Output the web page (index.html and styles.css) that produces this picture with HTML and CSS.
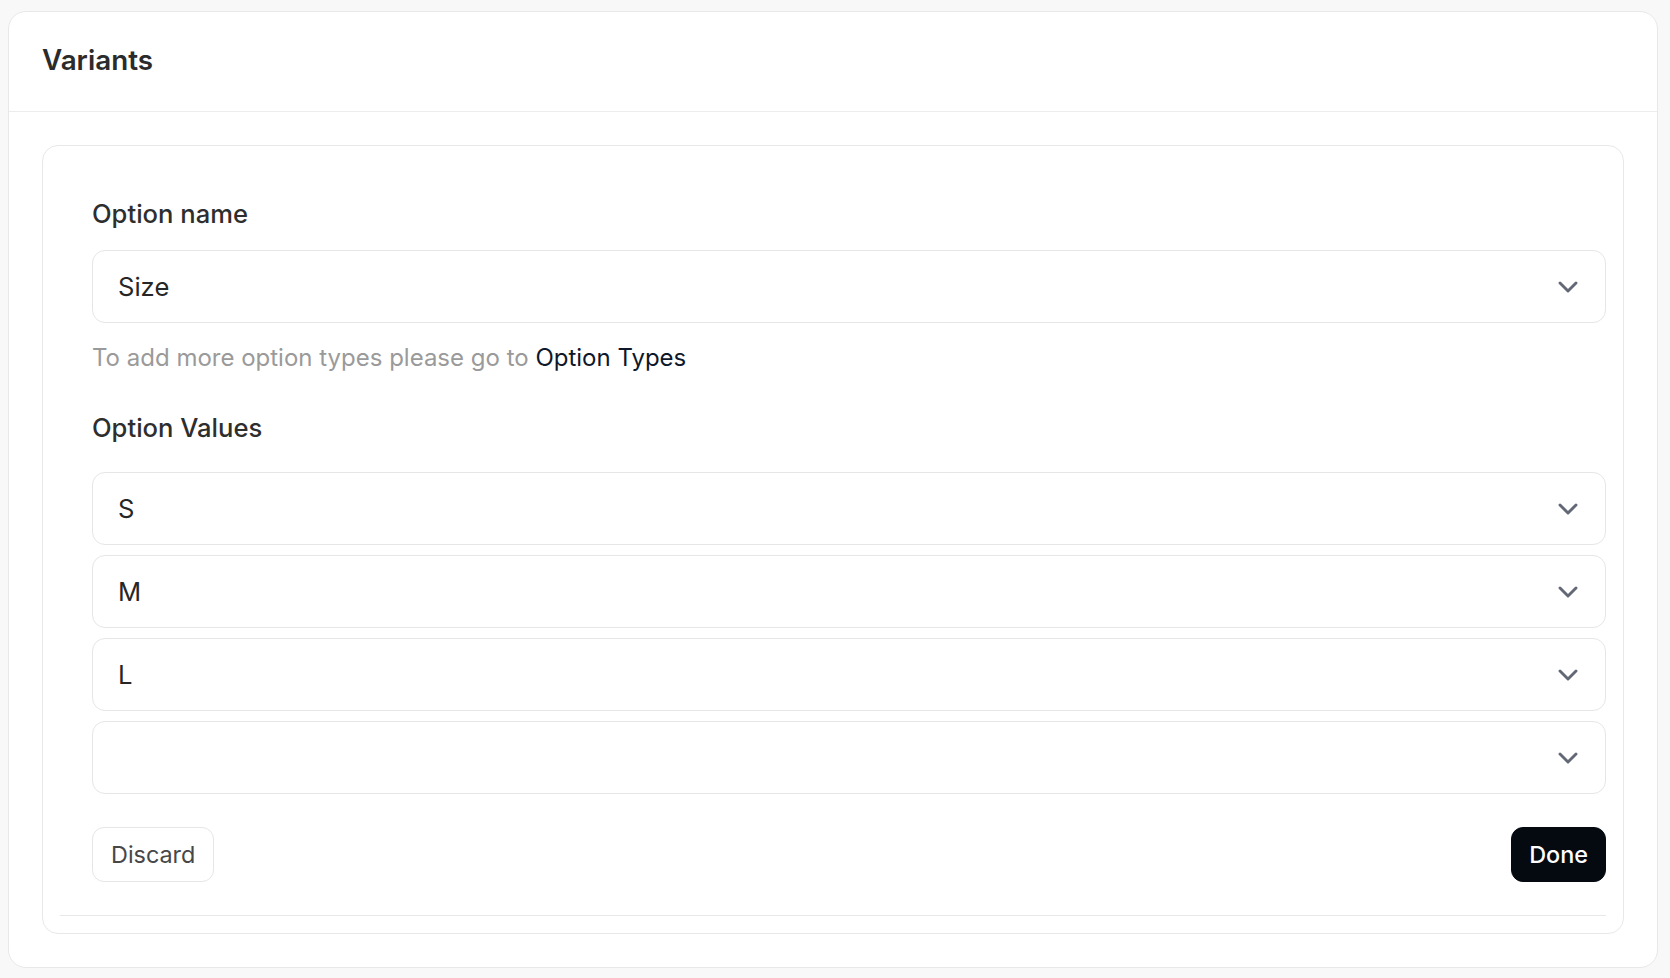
FILE: index.html
```html
<!DOCTYPE html>
<html>
<head>
  <link rel="stylesheet" href="styles.css">
</head>
<body>
  <div class="card">
    <div class="card-header">Variants</div>
    <div class="card-body">
      <div class="option-card">
        <div class="option-form">
          <div class="field-label">Option name</div>
          <div class="select">
            <span class="select-value">Size</span>
            <svg class="chevron" width="20" height="12" viewBox="0 0 20 12"><path d="M2 2 L10 10 L18 2" /></svg>
          </div>
          <div class="help-text">To add more option types please go to <a href="#" class="help-link">Option Types</a></div>

          <div class="field-label values-label">Option Values</div>
          <div class="values-list">
            <div class="select">
              <span class="select-value">S</span>
              <svg class="chevron" width="20" height="12" viewBox="0 0 20 12"><path d="M2 2 L10 10 L18 2" /></svg>
            </div>
            <div class="select">
              <span class="select-value">M</span>
              <svg class="chevron" width="20" height="12" viewBox="0 0 20 12"><path d="M2 2 L10 10 L18 2" /></svg>
            </div>
            <div class="select">
              <span class="select-value">L</span>
              <svg class="chevron" width="20" height="12" viewBox="0 0 20 12"><path d="M2 2 L10 10 L18 2" /></svg>
            </div>
            <div class="select">
              <span class="select-value"></span>
              <svg class="chevron" width="20" height="12" viewBox="0 0 20 12"><path d="M2 2 L10 10 L18 2" /></svg>
            </div>
          </div>

          <div class="actions">
            <button class="btn-discard">Discard</button>
            <button class="btn-done">Done</button>
          </div>
        </div>
      </div>
    </div>
  </div>
</body>
</html>
```

FILE: styles.css
```css
body {
  margin: 0;
  padding: 11px 12px 9px 8px;
  background: #f8f8f8;
  font-family: Inter, 'Liberation Sans', Arial, sans-serif;
  color: #2b2b2b;
}
.card {
  background: #fff;
  border: 1px solid #e8e8e8;
  border-radius: 18px;
}
.card-header {
  padding: 27px 33px 29px;
  border-bottom: 1px solid #ececec;
  font-size: 27.8px;
  font-weight: 600;
  line-height: 43px;
  color: #2b2b2b;
}
.card-body {
  padding: 33px;
}
.option-card {
  border: 1px solid #e8e8e8;
  border-radius: 16px;
  padding: 17px;
}
.option-form {
  padding: 32px 0 33px 32px;
  border-bottom: 1px solid #e8e8e8;
}
.field-label {
  font-size: 25.6px;
  font-weight: 500;
  line-height: 38px;
  color: #2e2e2e;
  margin-bottom: 17px;
}
.values-label {
  margin-top: 33px;
  margin-bottom: 25px;
}
.select {
  height: 73px;
  box-sizing: border-box;
  border: 1px solid #e6e6e6;
  border-radius: 13px;
  display: flex;
  align-items: center;
  justify-content: space-between;
  padding: 0 27px 0 25px;
  background: #fff;
}
.select-value {
  font-size: 25.6px;
  color: #262626;
}
.chevron path {
  fill: none;
  stroke: #626876;
  stroke-width: 2.9;
  stroke-linecap: round;
  stroke-linejoin: round;
}
.help-text {
  margin-top: 17px;
  font-size: 24px;
  line-height: 36px;
  color: #9a9a9a;
}
.help-link {
  color: #0f172a;
  text-decoration: none;
}
.values-list {
  display: flex;
  flex-direction: column;
  gap: 10px;
}
.actions {
  margin-top: 33px;
  display: flex;
  justify-content: space-between;
}
button {
  font-family: Inter, 'Liberation Sans', Arial, sans-serif;
  font-size: 23.4px;
  height: 55px;
  padding: 0 17px;
  border-radius: 12px;
  cursor: pointer;
}
.btn-discard {
  background: #fff;
  border: 1px solid #e6e6e6;
  color: #474747;
  padding: 0 18px;
}
.btn-done {
  background: #050a11;
  border: 1px solid #050a11;
  color: #fff;
  font-weight: 500;
}
```
